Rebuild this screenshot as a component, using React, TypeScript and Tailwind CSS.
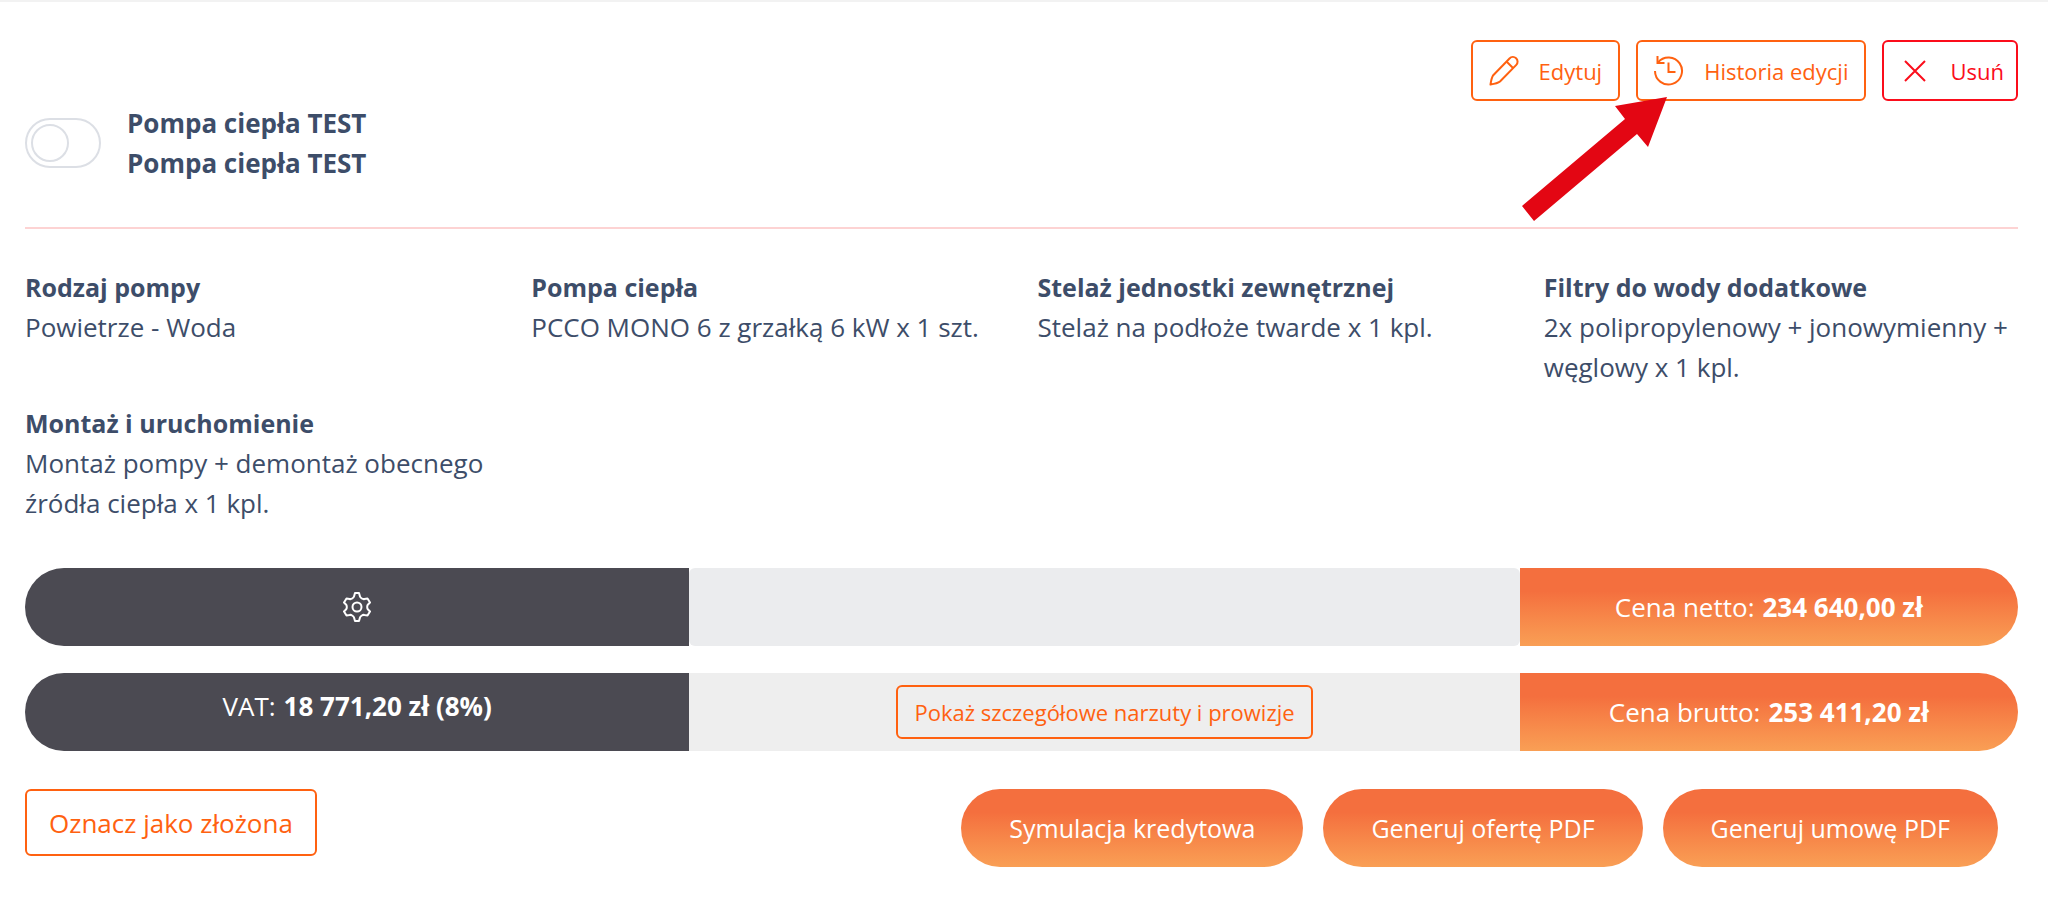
import { useState } from 'react';

const specs = [
  { label: 'Rodzaj pompy', value: 'Powietrze - Woda' },
  { label: 'Pompa ciepła', value: 'PCCO MONO 6 z grzałką 6 kW x 1 szt.' },
  { label: 'Stelaż jednostki zewnętrznej', value: 'Stelaż na podłoże twarde x 1 kpl.' },
  { label: 'Filtry do wody dodatkowe', value: '2x polipropylenowy + jonowymienny + węglowy x 1 kpl.' },
  { label: 'Montaż i uruchomienie', value: 'Montaż pompy + demontaż obecnego źródła ciepła x 1 kpl.' },
];

const PencilIcon = () => (
  <svg width="30" height="32" viewBox="0 0 30 32" fill="none" stroke="currentColor" strokeWidth="2" strokeLinejoin="round">
    <path d="M1.500 29.500c.5-3.500 1-6.500 2.500-9L20.500 3.500a4.600 4.600 0 0 1 6.800 6.400L11 26.500c-2.500 2-6 2.500-9.500 3z" />
    <path d="M17.500 6.500l6.500 6.500" />
  </svg>
);

const HistoryIcon = () => (
  <svg width="30" height="32" viewBox="0 0 30 32" fill="none" stroke="currentColor" strokeWidth="2">
    <path d="M1 16A13.500 13.500 0 1 0 4 7.500" />
    <path d="M3.500 1v7h7" />
    <path d="M14.500 7.500v9.500h7" />
  </svg>
);

const CloseIcon = () => (
  <svg width="22" height="24" viewBox="0 0 22 24" fill="none" stroke="currentColor" strokeWidth="2">
    <path d="M1 2l20 20M21 2L1 22" />
  </svg>
);

const GearIcon = () => (
  <svg width="28" height="30" viewBox="0 0 28 30" fill="none" stroke="currentColor" strokeWidth="2" strokeLinejoin="round">
    <path d="M12 1h4l1 3.500c.3 1 1 1.500 1.800 2 .9.600 1.700.800 2.600.500L24.500 6.500l2.500 4-2.200 2.200c-.5.600-.6 1.300-.6 2.300s.1 1.700.6 2.300L27 19.500l-2.500 4-3.100-.5c-.9-.300-1.700-.100-2.600.500-.8.500-1.500 1-1.800 2L16 29h-4l-1-3.500c-.3-1-1-1.500-1.800-2-.9-.600-1.700-.800-2.600-.500L3.500 23.500 1 19.500l2.200-2.200c.5-.600.6-1.300.6-2.300s-.1-1.700-.6-2.300L1 10.500l2.500-4 3.100.5c.9.300 1.700.100 2.600-.500.8-.500 1.500-1 1.800-2z" />
    <circle cx="14" cy="15" r="4.500" />
  </svg>
);

const App = () => {
  const [active, setActive] = useState(false);

  return (
    <main className="relative border-t-2 border-[#f2f2f2] bg-white pl-[25px] pr-[30px] pt-[38px] font-['Open_Sans',sans-serif] text-[26px] leading-10 text-[#3d4d69]">
      <div className="flex justify-end gap-4 text-[22px]">
        <button className="flex h-[61px] items-center gap-5 rounded-md border-2 border-[#ff6110] px-4 text-[#ff6110]">
          <PencilIcon />
          Edytuj
        </button>
        <button className="flex h-[61px] items-center gap-5 rounded-md border-2 border-[#ff6110] px-4 text-[#ff6110]">
          <HistoryIcon />
          Historia edycji
        </button>
        <button className="flex h-[61px] items-center gap-6 rounded-md border-2 border-[#fb0d1b] pl-5 pr-3 text-[#fb0d1b]">
          <CloseIcon />
          Usuń
        </button>
      </div>

      <div className="flex items-center gap-[26px] border-b-2 border-[#fdd3d3] pb-11 pt-[2px] font-bold">
        <button
          role="switch"
          aria-checked={active}
          aria-label="Pompa ciepła TEST"
          onClick={() => setActive(!active)}
          className="flex h-[50px] w-[76px] items-center rounded-full border-2 border-[#dcdfe5] px-1"
        >
          <span className={`size-[38px] rounded-full border-2 border-[#dcdfe5] ${active ? 'ml-auto' : ''}`} />
        </button>
        <div>
          <p>Pompa ciepła TEST</p>
          <p>Pompa ciepła TEST</p>
        </div>
      </div>

      <dl className="grid grid-cols-4 gap-x-8 gap-y-4 pt-[38px]">
        {specs.map((spec) => (
          <div key={spec.label}>
            <dt className="text-[25px] font-bold">{spec.label}</dt>
            <dd>{spec.value}</dd>
          </div>
        ))}
      </dl>

      <div className="mt-[45px] grid h-[78px] grid-cols-12 text-white">
        <button aria-label="Ustawienia" className="col-span-4 flex items-center justify-center rounded-l-full bg-[#4b4a52]">
          <GearIcon />
        </button>
        <div className="col-span-5 rounded-md bg-[#ebecee]" />
        <div className="col-span-3 flex items-center justify-center gap-2 rounded-r-full bg-linear-to-b from-[#f46f3e] from-30% to-[#f99f55]">
          Cena netto: <strong>234 640,00 zł</strong>
        </div>
      </div>

      <div className="mt-[27px] grid h-[78px] grid-cols-12 text-white">
        <div className="col-span-4 flex items-center justify-center gap-2 rounded-l-full bg-[#4b4a52] pb-3">
          VAT: <strong>18 771,20 zł (8%)</strong>
        </div>
        <div className="col-span-5 flex items-center justify-center bg-[#eeeeee]">
          <button className="h-[54px] rounded-md border-2 border-[#ff6110] px-4 text-[22px] text-[#ff6110]">
            Pokaż szczegółowe narzuty i prowizje
          </button>
        </div>
        <div className="col-span-3 flex items-center justify-center gap-2 rounded-r-full bg-linear-to-b from-[#f46f3e] from-30% to-[#f99f55]">
          Cena brutto: <strong>253 411,20 zł</strong>
        </div>
      </div>

      <div className="mt-[38px] flex items-start justify-between">
        <button className="h-[67px] rounded-md border-2 border-[#ff6110] px-[22px] text-[#ff6110]">Oznacz jako złożona</button>
        <div className="flex gap-5 pr-5 text-[25px] text-white">
          <button className="h-[78px] rounded-full bg-linear-to-b from-[#f46f3e] from-30% to-[#f99f55] px-12">Symulacja kredytowa</button>
          <button className="h-[78px] rounded-full bg-linear-to-b from-[#f46f3e] from-30% to-[#f99f55] px-12">Generuj ofertę PDF</button>
          <button className="h-[78px] rounded-full bg-linear-to-b from-[#f46f3e] from-30% to-[#f99f55] px-12">Generuj umowę PDF</button>
        </div>
      </div>

      <svg className="absolute right-[380px] top-[95px]" width="146" height="124" viewBox="0 0 146 124" fill="#e30613">
        <path d="M145 0L93 9l10 13L0 109l12 15L115 37l11 13z" />
      </svg>
    </main>
  );
};

export default App;
